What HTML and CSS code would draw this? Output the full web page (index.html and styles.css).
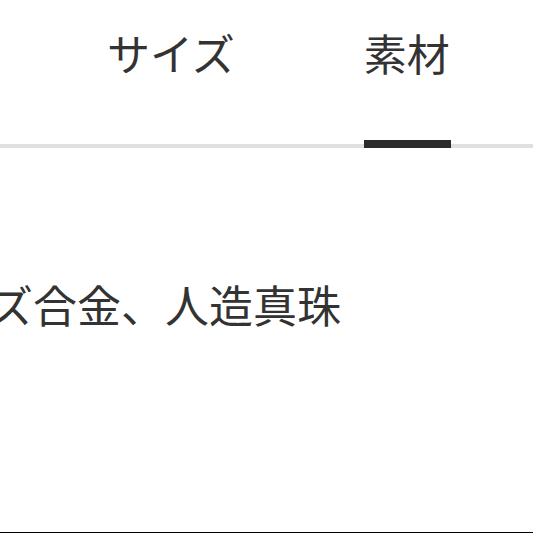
FILE: index.html
```html
<!DOCTYPE html>
<html lang="ja">
<head>
<meta charset="utf-8">
<link rel="stylesheet" href="styles.css">
</head>
<body>
<div class="page">
  <nav class="tabs">
    <div class="tab">サイズ</div>
    <div class="tab active">素材</div>
  </nav>
  <p class="material">ズ合金、人造真珠</p>
</div>
</body>
</html>
```

FILE: styles.css
```css
html, body {
  margin: 0;
  padding: 0;
  background: #fff;
}
.page {
  box-sizing: border-box;
  height: 533px;
  border-bottom: 1px solid #000;
  overflow: hidden;
  font-family: "Noto Sans CJK JP", "Noto Sans", sans-serif;
  color: #333;
}
.tabs {
  display: flex;
  align-items: flex-start;
  gap: 129px;
  padding-left: 107px;
  height: 144px;
  border-bottom: 4px solid #e0e0e0;
}
.tab {
  box-sizing: border-box;
  height: 144px;
  padding-top: 28px;
  font-size: 43px;
  line-height: 48px;
  white-space: nowrap;
}
.tab.active {
  height: 148px;
  padding-right: 1px;
  border-bottom: 8px solid #2b2b2b;
}
.material {
  margin: 132px 0 0 -11px;
  font-size: 44px;
  line-height: 48px;
  white-space: nowrap;
}
```
